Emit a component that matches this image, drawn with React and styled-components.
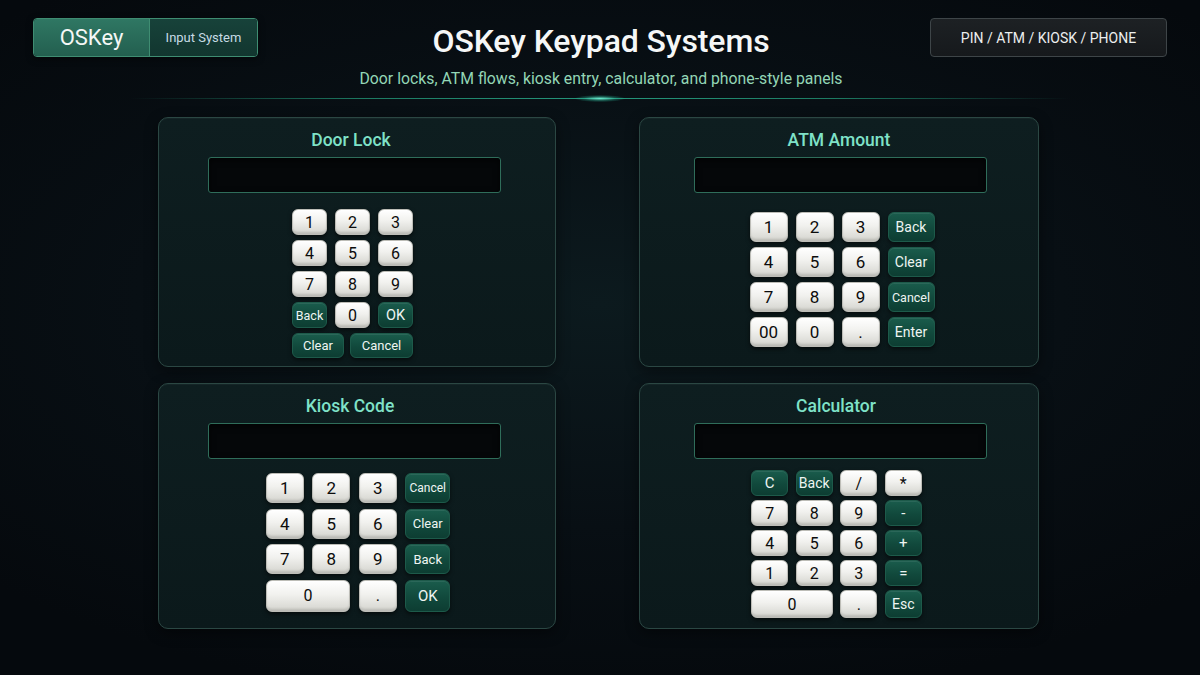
import React from "react";
import styled, { createGlobalStyle } from "styled-components";

const Global = createGlobalStyle`
  html, body { margin: 0; padding: 0; }
  body {
    width: 1200px;
    height: 675px;
    overflow: hidden;
    background: radial-gradient(ellipse 70% 60% at 50% 45%, #0c1a1e 0%, #080f14 55%, #05090d 100%);
    font-family: Roboto, "Noto Sans", "Liberation Sans", sans-serif;
    color: #fff;
  }
`;

const Page = styled.div`
  width: 1200px;
  height: 675px;
  box-sizing: border-box;
  padding: 18px 33px 0;
  display: flex;
  flex-direction: column;
`;

const Header = styled.header`
  display: grid;
  grid-template-columns: 225px 1fr 237px;
  align-items: start;
  height: 80px;
`;

const Brand = styled.div`
  display: flex;
  height: 39px;
  box-sizing: border-box;
  border: 1px solid #3f8d72;
  border-radius: 4px;
  overflow: hidden;
  box-shadow: 0 2px 6px rgba(0, 0, 0, 0.5);
`;

const BrandName = styled.div`
  width: 115px;
  display: flex;
  align-items: center;
  justify-content: center;
  background: linear-gradient(180deg, #2f7763 0%, #235f4f 100%);
  border-right: 1px solid #3f8d72;
  font-size: 22px;
  font-weight: 400;
  color: #f4f8f6;
`;

const BrandTag = styled.div`
  flex: 1;
  display: flex;
  align-items: center;
  justify-content: center;
  background: linear-gradient(180deg, #17423a 0%, #12362f 100%);
  font-size: 13px;
  color: #c6dbe4;
`;

const Center = styled.div`
  display: flex;
  flex-direction: column;
  align-items: center;
  padding-left: 14px;
`;

const Title = styled.h1`
  margin: 4px 0 0;
  font-size: 32px;
  line-height: 38px;
  font-weight: 500;
  color: #f5f7f7;
  letter-spacing: -0.1px;
`;

const Subtitle = styled.div`
  margin-top: 9px;
  font-size: 15.8px;
  line-height: 20px;
  color: #93d6b6;
`;

const Badge = styled.div`
  height: 39px;
  box-sizing: border-box;
  display: flex;
  align-items: center;
  justify-content: center;
  background: linear-gradient(180deg, #1d2124 0%, #16191c 100%);
  border: 1px solid #3e4548;
  border-radius: 4px;
  font-size: 14px;
  color: #eceeee;
`;

const Divider = styled.div`
  position: relative;
  height: 1px;
  margin: 0 97px;
  background: linear-gradient(90deg, rgba(30,120,96,0) 0%, #1c7a62 25%, #25977c 50%, #1c7a62 75%, rgba(30,120,96,0) 100%);
  &::after {
    content: "";
    position: absolute;
    left: 50%;
    top: -3px;
    width: 50px;
    height: 7px;
    transform: translateX(-50%);
    border-radius: 50%;
    background: radial-gradient(ellipse at center, rgba(110,240,210,0.9) 0%, rgba(40,180,150,0.35) 45%, rgba(0,0,0,0) 75%);
  }
`;

const Grid = styled.main`
  margin-top: 18px;
  margin-left: 125px;
  display: grid;
  grid-template-columns: 398px 400px;
  grid-template-rows: 250px 246px;
  column-gap: 83px;
  row-gap: 16px;
`;

const Panel = styled.section`
  box-sizing: border-box;
  display: flex;
  flex-direction: column;
  align-items: center;
  padding-top: 12px;
  background: linear-gradient(180deg, #0e1e20 0%, #0b191b 100%);
  border: 1px solid #2b4743;
  border-radius: 10px;
  box-shadow: 0 4px 14px rgba(0, 0, 0, 0.45), inset 0 1px 0 rgba(255,255,255,0.03);
`;

const PanelTitle = styled.h2`
  margin: 0 0 0 ${(p) => p.$shift || 0}px;
  font-size: 17.5px;
  line-height: 20px;
  font-weight: 500;
  color: #7fe2c8;
`;

const Display = styled.div`
  margin: 7px 0 0 ${(p) => p.$shift || 0}px;
  width: 293px;
  height: 36px;
  box-sizing: border-box;
  background: #050709;
  border: 1px solid #2f6d5a;
  border-radius: 3px;
  box-shadow: inset 0 2px 6px rgba(0,0,0,0.7);
`;

const KeyGrid = styled.div`
  margin-top: ${(p) => p.$mt}px;
  display: grid;
  grid-template-columns: ${(p) => p.$cols};
  grid-auto-rows: ${(p) => p.$rowH}px;
  column-gap: ${(p) => p.$colGap}px;
  row-gap: ${(p) => p.$rowGap}px;
  margin-left: ${(p) => p.$shift || 0}px;
`;

const FooterRow = styled.div`
  margin-top: 5px;
  display: flex;
  gap: 6px;
  height: 25px;
  margin-left: ${(p) => p.$shift || 0}px;
`;

const Key = styled.div`
  grid-column: span ${(p) => p.$span || 1};
  ${(p) => (p.$w ? `width: ${p.$w}px;` : "")}
  ${(p) => (p.$h ? `height: ${p.$h}px; align-self: start;` : "")}
  box-sizing: border-box;
  display: flex;
  align-items: center;
  justify-content: center;
  border-radius: 6px;
  font-size: ${(p) => p.$fs || 16}px;
  user-select: none;
  ${(p) =>
    p.$dark
      ? `
    background: linear-gradient(180deg, #1a5c4c 0%, #11493c 55%, #0d3d32 100%);
    border: 1px solid #1d5a4a;
    color: #eef5f2;
    box-shadow: 0 2px 4px rgba(0,0,0,0.55), inset 0 1px 0 rgba(255,255,255,0.08);
  `
      : `
    background: linear-gradient(180deg, #ffffff 0%, #f1f1ee 45%, #dcdcd7 85%, #c9c9c3 100%);
    border: 1px solid #bdbdb7;
    color: #0c0c0c;
    box-shadow: 0 2px 4px rgba(0,0,0,0.6), inset 0 1px 0 rgba(255,255,255,0.9), inset 0 -2px 2px rgba(0,0,0,0.08);
  `}
`;

const doorKeys = [
  ["1"], ["2"], ["3"],
  ["4"], ["5"], ["6"],
  ["7"], ["8"], ["9"],
  ["Back", true, 12.5], ["0"], ["OK", true, 14.5],
];

const atmKeys = [
  ["1"], ["2"], ["3"], ["Back", true, 14],
  ["4"], ["5"], ["6"], ["Clear", true, 14],
  ["7"], ["8"], ["9"], ["Cancel", true, 12.5],
  ["00"], ["0"], ["."], ["Enter", true, 14],
];

const kioskKeys = [
  ["1"], ["2"], ["3"], ["Cancel", true, 12],
  ["4"], ["5"], ["6"], ["Clear", true, 13],
  ["7"], ["8"], ["9"], ["Back", true, 13],
  ["0", false, 16, 2, 32], [".", false, 16, 1, 32], ["OK", true, 15, 1, 32],
];

const calcKeys = [
  ["C", true, 15], ["Back", true, 14], ["/"], ["*"],
  ["7"], ["8"], ["9"], ["-", true, 15],
  ["4"], ["5"], ["6"], ["+", true, 15],
  ["1"], ["2"], ["3"], ["=", true, 15],
  ["0", false, 16, 2, 28], [".", false, 16, 1, 28], ["Esc", true, 14, 1, 28],
];

function Keys({ keys, fs }) {
  return keys.map(([label, dark, size, span, h], i) => (
    <Key key={i} $dark={dark} $fs={size || fs} $span={span} $h={h}>
      {label}
    </Key>
  ));
}

export default function App() {
  return (
    <>
      <Global />
      <Page>
        <Header>
          <Brand>
            <BrandName>OSKey</BrandName>
            <BrandTag>Input System</BrandTag>
          </Brand>
          <Center>
            <Title>OSKey Keypad Systems</Title>
            <Subtitle>Door locks, ATM flows, kiosk entry, calculator, and phone-style panels</Subtitle>
          </Center>
          <Badge>PIN / ATM / KIOSK / PHONE</Badge>
        </Header>
        <Divider />
        <Grid>
          <Panel>
            <PanelTitle $shift={-12}>Door Lock</PanelTitle>
            <Display $shift={-5} />
            <KeyGrid $mt={16} $cols="35px 35px 35px" $rowH={26} $colGap={8} $rowGap={5} $shift={-9}>
              <Keys keys={doorKeys} fs={16} />
            </KeyGrid>
            <FooterRow $shift={-9}>
              <Key $dark $w={52} $fs={13}>Clear</Key>
              <Key $dark $w={63} $fs={13}>Cancel</Key>
            </FooterRow>
          </Panel>
          <Panel>
            <PanelTitle>ATM Amount</PanelTitle>
            <Display $shift={3} />
            <KeyGrid $mt={19} $cols="38px 38px 38px 47px" $rowH={30} $colGap={8} $rowGap={5} $shift={6}>
              <Keys keys={atmKeys} fs={17} />
            </KeyGrid>
          </Panel>
          <Panel>
            <PanelTitle $shift={-14}>Kiosk Code</PanelTitle>
            <Display $shift={-5} />
            <KeyGrid $mt={14} $cols="38px 38px 38px 45px" $rowH={30} $colGap={8.5} $rowGap={5.5} $shift={2}>
              <Keys keys={kioskKeys} fs={17} />
            </KeyGrid>
          </Panel>
          <Panel>
            <PanelTitle $shift={-6}>Calculator</PanelTitle>
            <Display $shift={3} />
            <KeyGrid $mt={11} $cols="37px 37px 37px 37px" $rowH={26} $colGap={7.5} $rowGap={4} $shift={-5}>
              <Keys keys={calcKeys} fs={16} />
            </KeyGrid>
          </Panel>
        </Grid>
      </Page>
    </>
  );
}
